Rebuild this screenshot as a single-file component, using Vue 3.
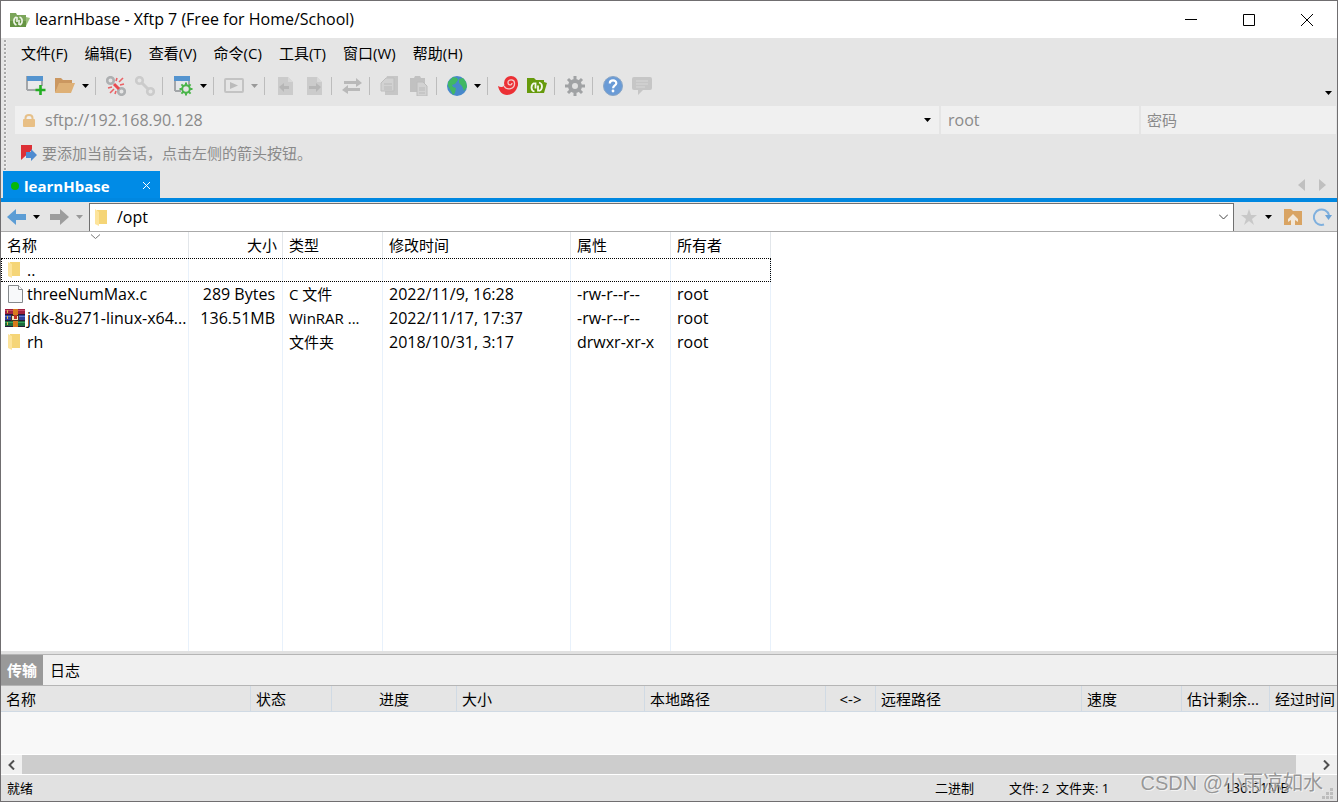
<script setup>
import { ref } from 'vue'

const menus = ['文件(F)', '编辑(E)', '查看(V)', '命令(C)', '工具(T)', '窗口(W)', '帮助(H)']

const tools = [
  { icon: 'new', label: '新建会话' },
  { icon: 'open', label: '打开会话', drop: 'on' },
  { sep: true },
  { icon: 'disconnect', label: '断开' },
  { icon: 'connect', label: '重新连接' },
  { sep: true },
  { icon: 'props', label: '属性', drop: 'on' },
  { sep: true },
  { icon: 'run', label: '运行', drop: 'off' },
  { sep: true },
  { icon: 'toLeft', label: '向左传输' },
  { icon: 'toRight', label: '向右传输' },
  { sep: true },
  { icon: 'swap', label: '同步' },
  { sep: true },
  { icon: 'copy', label: '复制' },
  { icon: 'paste', label: '粘贴' },
  { sep: true },
  { icon: 'globe', label: '语言', drop: 'on' },
  { sep: true },
  { icon: 'shell', label: 'Xshell' },
  { icon: 'ftp', label: 'Xftp' },
  { sep: true },
  { icon: 'gear', label: '选项' },
  { sep: true },
  { icon: 'help', label: '帮助' },
  { icon: 'chat', label: '反馈' }
]

const files = [
  { icon: 'folder', name: '..', size: '', type: '', time: '', attr: '', owner: '', focus: true },
  { icon: 'file', name: 'threeNumMax.c', size: '289 Bytes', type: 'C 文件', time: '2022/11/9, 16:28', attr: '-rw-r--r--', owner: 'root' },
  { icon: 'rar', name: 'jdk-8u271-linux-x64...', size: '136.51MB', type: 'WinRAR ...', time: '2022/11/17, 17:37', attr: '-rw-r--r--', owner: 'root' },
  { icon: 'folder', name: 'rh', size: '', type: '文件夹', time: '2018/10/31, 3:17', attr: 'drwxr-xr-x', owner: 'root' }
]

const address = ref('sftp://192.168.90.128')
const user = ref('root')
const password = ref('')
const path = ref('/opt')
</script>

<template>
  <div class="window">
    <header class="titlebar">
      <svg class="app-icon" viewBox="0 0 20 16" width="20" height="16">
        <path d="M0 1h6l1 2h9v12H0z" fill="#7ba55a" />
        <path d="M0 9h16v6H0z" fill="#659443" />
        <path d="M16 5l4 1-4 8z" fill="#9cc07c" />
        <path d="M7 5v5M6.500 13C3 12 3 6 6.500 5M9 8v5M9.500 5c3.500 1 3.500 7 0 8" stroke="#eef4e8" stroke-width="1.600" fill="none" />
      </svg>
      <h1 class="title">learnHbase - Xftp 7 (Free for Home/School)</h1>
      <button class="win-btn" aria-label="最小化"><svg width="12" height="12"><path d="M0 5.5h12" stroke="#000" /></svg></button>
      <button class="win-btn" aria-label="最大化"><svg width="12" height="12"><path d="M.5.5h11v11H.5z" fill="none" stroke="#000" /></svg></button>
      <button class="win-btn" aria-label="关闭"><svg width="12" height="12"><path d="M0 0l12 12M12 0L0 12" stroke="#000" /></svg></button>
    </header>

    <div class="bars">
      <nav class="menubar">
        <button v-for="m in menus" :key="m" class="menu">{{ m }}</button>
      </nav>

      <div class="toolbar" role="toolbar">
        <template v-for="(t, i) in tools" :key="i">
          <span v-if="t.sep" class="sep"></span>
          <template v-else>
            <button class="tool" :aria-label="t.label">
              <svg viewBox="0 0 20 20" width="20" height="20">
                <g v-if="t.icon === 'new'">
                  <path d="M1 14V1h15v9M1 14h9" fill="#e9eaec" stroke="#a3a6a9" stroke-width="2" />
                  <path d="M1 0h16v5H1z" fill="#5494cf" />
                  <path d="M14.5 9v10M9.500 14h10" stroke="#23ae23" stroke-width="2.600" />
                </g>
                <g v-else-if="t.icon === 'open'">
                  <path d="M0 2h6l2 2h9v4H5L0 17z" fill="#cb9760" />
                  <path d="M4 7h16l-4 10H0z" fill="#deb076" />
                </g>
                <g v-else-if="t.icon === 'disconnect'">
                  <g fill="none" stroke="#aeb0b2" stroke-width="2.600">
                    <circle cx="4.500" cy="4.500" r="3.300" /><circle cx="15.500" cy="15.500" r="3.300" />
                  </g>
                  <path d="M8 8l5 5" stroke="#e84a50" stroke-width="3" />
                  <path d="M10 5l1-3M13 6l4-4M14 9l4-1M6 11l-4 1M8 13l-4 4M10 15l-1 3" stroke="#ea6266" stroke-width="1.600" />
                </g>
                <g v-else-if="t.icon === 'connect'" fill="none" stroke="#cbcbcb" stroke-width="2.600">
                  <circle cx="4.500" cy="4.500" r="3.300" /><circle cx="15.500" cy="15.500" r="3.300" /><path d="M6.500 6.500l7 7" stroke-width="3" />
                </g>
                <g v-else-if="t.icon === 'props'">
                  <path d="M2 15V1h14v9M2 15h6" fill="#e4e7ea" stroke="#a3a6a9" stroke-width="2" />
                  <path d="M1 0h16v5H1z" fill="#5494cf" />
                  <circle cx="13" cy="13" r="3.800" fill="#e5e5e5" stroke="#4ab54a" stroke-width="2" />
                  <path d="M13 6.500v3M13 16.500v3M6.500 13h3M16.500 13h3M8.400 8.400l2 2M15.600 15.600l2 2M17.600 8.400l-2 2M10.400 15.600l-2 2" stroke="#4ab54a" stroke-width="2" />
                </g>
                <g v-else-if="t.icon === 'run'">
                  <rect x="1" y="3" width="18" height="13" rx="1" fill="none" stroke="#c3c3c3" stroke-width="2" />
                  <path d="M6 6l8 3.500L6 13z" fill="#bbb" />
                </g>
                <g v-else-if="t.icon === 'toLeft' || t.icon === 'toRight'">
                  <path d="M3 1h10l5 5v13H3z" fill="#cbcbcb" />
                  <path d="M13 1v5h5" fill="#d9d9d9" />
                  <path v-if="t.icon === 'toLeft'" d="M4 11l5-4v3h5v3H9v3z" fill="#b6b6b6" />
                  <path v-else d="M17 11l-5-4v3H5v3h7v3z" fill="#b6b6b6" />
                </g>
                <g v-else-if="t.icon === 'swap'" fill="#b9b9b9">
                  <path d="M2 5h12V2l6 5-6 4V8H2zM18 12H6V9l-6 5 6 4v-3h12z" />
                </g>
                <g v-else-if="t.icon === 'copy'">
                  <path d="M7 0h11v19H5V6z" fill="#c6c6c6" />
                  <path d="M6 2h8v13H1V7z" fill="#d2d2d2" stroke="#bebebe" />
                  <path d="M4 8h8M4 11h8M4 13h8" stroke="#bababa" />
                </g>
                <g v-else-if="t.icon === 'paste'">
                  <path d="M1 2h4l1-2h5l1 2h4v14H1z" fill="#c1c1c1" />
                  <path d="M8 6h6l4 4v10H8z" fill="#d2d2d2" stroke="#bcbcbc" />
                  <path d="M10 12h6M10 14h6M10 17h6" stroke="#bababa" />
                </g>
                <g v-else-if="t.icon === 'globe'">
                  <circle cx="10" cy="10" r="10" fill="#4788cb" />
                  <path d="M1 6l5-5 4 1 1 2-3 4-3 1 1 2 3 1-1 5-2 2-2-4-3-5zM12 3l4-1 3 4 1 5-3 4-2-5-3-3z" fill="#41b863" />
                </g>
                <g v-else-if="t.icon === 'shell'">
                  <path d="M0 10c3 2 5 1 7-1l13-2c0 7-5 12-11 12C4 19 1 15 0 10z" fill="#ec3035" />
                  <circle cx="13" cy="7" r="7" fill="#ec3035" />
                  <path d="M6 10c3 5 11 3 10.500-3 0-4-6.500-4-6.500-.5 0 3 4 3 4 .5" fill="none" stroke="#f3c9c9" stroke-width="1.300" />
                </g>
                <g v-else-if="t.icon === 'ftp'">
                  <path d="M0 2h7l2 2h8v13H0z" fill="#669a0b" />
                  <path d="M17 6l3 1-3 10z" fill="#669a0b" />
                  <path d="M8.500 6.500v6M7.500 15.500c-4-1-4-7 0-8.500M11 9.500v6M12 6.500c4 1 4 7 0 8.500" stroke="#f3f7ea" stroke-width="1.800" fill="none" />
                </g>
                <g v-else-if="t.icon === 'gear'">
                  <circle cx="10" cy="10" r="5" fill="#e0e0e0" stroke="#a0a2a4" stroke-width="4" />
                  <path d="M10 0v4M10 16v4M0 10h4M16 10h4M3 3l3 3M14 14l3 3M17 3l-3 3M6 14l-3 3" stroke="#a0a2a4" stroke-width="3" />
                </g>
                <g v-else-if="t.icon === 'help'">
                  <circle cx="10" cy="10" r="9.500" fill="#6a9bd6" stroke="#8aa6c5" />
                  <path d="M6.800 7.500c0-4 6.500-4 6.500-.3 0 2.300-3.200 2.300-3.200 5" fill="none" stroke="#fff" stroke-width="2.200" />
                  <circle cx="10" cy="15" r="1.400" fill="#fff" />
                </g>
                <g v-else-if="t.icon === 'chat'">
                  <path d="M2 1h16q2 0 2 2v9q0 2-2 2h-7l-5 5v-5H2q-2 0-2-2V3q0-2 2-2z" fill="#c6c6c6" />
                  <path d="M4 5h12M4 8h12M4 11h9" stroke="#d8d8d8" />
                </g>
              </svg>
            </button>
            <button v-if="t.drop" class="drop" :class="{ off: t.drop === 'off' }" :aria-label="t.label + '列表'">
              <svg width="7" height="4"><path d="M0 0h7L3.500 4z" fill="currentColor" /></svg>
            </button>
          </template>
        </template>
        <button class="drop last" aria-label="更多"><svg width="7" height="4"><path d="M0 0h7L3.500 4z" fill="currentColor" /></svg></button>
      </div>

      <div class="address">
        <div class="field host">
          <svg class="lock" width="12" height="13" viewBox="0 0 12 13">
            <path d="M2.500 6V4c0-4 7-4 7 0v2" fill="none" stroke="#e6c089" stroke-width="2" />
            <rect y="5" width="12" height="8" rx="1" fill="#e8bf85" />
          </svg>
          <input v-model="address" aria-label="主机地址">
          <button class="drop" aria-label="地址列表"><svg width="7" height="4"><path d="M0 0h7L3.500 4z" fill="currentColor" /></svg></button>
        </div>
        <div class="field user"><input v-model="user" aria-label="用户名"></div>
        <div class="field pass"><input v-model="password" type="password" placeholder="密码" aria-label="密码"></div>
      </div>

      <div class="hint">
        <svg width="16" height="16" viewBox="0 0 16 16">
          <path d="M0 0h11v5L0 15z" fill="#dd3036" />
          <path d="M5 7h5V4l6 6-6 6v-3H5z" fill="#4e8bd0" />
        </svg>
        <span>要添加当前会话，点击左侧的箭头按钮。</span>
      </div>
    </div>

    <div class="tabs">
      <div class="tab">
        <span class="dot"></span>
        <span class="tab-name">learnHbase</span>
        <button class="tab-close" aria-label="关闭标签"><svg width="7" height="7"><path d="M0 0l7 7M7 0L0 7" stroke="#fff" /></svg></button>
      </div>
      <button class="scroll-tab" aria-label="上一个"><svg width="7" height="12"><path d="M7 0v12L0 6z" fill="#c0c0c0" /></svg></button>
      <button class="scroll-tab" aria-label="下一个"><svg width="7" height="12"><path d="M0 0v12l7-6z" fill="#c0c0c0" /></svg></button>
    </div>

    <div class="pathbar">
      <button class="nav-btn" aria-label="后退"><svg width="19" height="16"><path d="M0 8l9-8v5h10v6H9v5z" fill="#5c9dd5" /></svg></button>
      <button class="drop" aria-label="后退列表"><svg width="7" height="4"><path d="M0 0h7L3.500 4z" fill="currentColor" /></svg></button>
      <button class="nav-btn forward" aria-label="前进"><svg width="19" height="16"><path d="M19 8l-9-8v5H0v6h10v5z" fill="#9d9d9d" /></svg></button>
      <button class="drop off" aria-label="前进列表"><svg width="7" height="4"><path d="M0 0h7L3.500 4z" fill="currentColor" /></svg></button>
      <div class="path">
        <svg width="12" height="17" viewBox="0 0 12 17"><path d="M2 1h10v14H2z" fill="#f5d577" /><path d="M0 0l4 3v14l-4-2z" fill="#fde49b" /></svg>
        <input v-model="path" aria-label="远程路径">
        <button class="path-drop" aria-label="路径列表"><svg width="9" height="6"><path d="M0 .5l4.500 4.500L9 .5" fill="none" stroke="#444" /></svg></button>
      </div>
      <button class="side star" aria-label="收藏"><svg width="16" height="16" viewBox="0 0 16 16"><path d="M8 0l2 6h6l-5 4 2 6-5-4-5 4 2-6-5-4h6z" fill="#c8c8c8" /></svg></button>
      <button class="drop" aria-label="收藏列表"><svg width="7" height="4"><path d="M0 0h7L3.500 4z" fill="currentColor" /></svg></button>
      <button class="side up" aria-label="上级目录"><svg width="18" height="16" viewBox="0 0 18 16"><path d="M0 0h7l2 2h9v14H0z" fill="#d9a463" /><path d="M9 5l5 5v3l-3-2v5H7v-5l-3 2v-3z" fill="#f2e8da" /></svg></button>
      <button class="side" aria-label="刷新"><svg width="19" height="18" viewBox="0 0 19 18"><path d="M11 16.500A7.700 7.700 0 1 1 16 7" fill="none" stroke="#7fb0de" stroke-width="2" /><path d="M12 7h7l-3.500 5z" fill="#6ba3d8" /></svg></button>
    </div>

    <main class="listing">
      <table class="files">
        <colgroup><col class="c-name"><col class="c-size"><col class="c-type"><col class="c-time"><col class="c-attr"><col class="c-own"></colgroup>
        <thead>
          <tr>
            <th class="sorted">名称<svg class="sort" width="9" height="5"><path d="M0 .5L4.500 4.500 9 .5" fill="none" stroke="#777" /></svg></th>
            <th class="num">大小</th><th>类型</th><th>修改时间</th><th>属性</th><th>所有者</th>
          </tr>
        </thead>
        <tbody>
          <tr v-for="f in files" :key="f.name" class="row" :class="{ focus: f.focus }">
            <td class="name-cell">
              <div class="name">
                <span class="ficon">
                  <svg v-if="f.icon === 'folder'" class="folder" width="12" height="16" viewBox="0 0 12 16"><path d="M2 0h10v14H2z" fill="#f5d577" /><path d="M0 0l4 2v14l-4-2z" fill="#fde49b" /></svg>
                  <svg v-else-if="f.icon === 'file'" class="file" width="15" height="18" viewBox="0 0 15 18"><path d="M.5.5h10l4 4v13H.5z" fill="#f8f9fa" stroke="#85898c" /><path d="M10.500.5v4h4" fill="#fff" stroke="#85898c" /></svg>
                  <svg v-else width="20" height="18" viewBox="0 0 20 18">
                    <path d="M0 0h20v6H0z" fill="#a02040" /><path d="M0 1h20v1H0z" fill="#c84a68" />
                    <path d="M0 6h20v6H0z" fill="#2f3f9b" /><path d="M0 7h20v1H0z" fill="#5c78d2" />
                    <path d="M0 12h20v6H0z" fill="#1d6c3c" /><path d="M0 13h20v1H0z" fill="#37a05b" />
                    <path d="M0 5h20v1H0zM0 11h20v1H0zM0 17h20v1H0z" fill="#241a38" />
                    <path d="M2 1h1v3H2zM2 7h1v3H2zM2 13h1v3H2z" fill="#e0b84a" />
                    <path d="M8 0h5v18H8z" fill="#d87a1d" />
                    <path d="M6 6h8v6H6z" fill="#4b3420" /><path d="M7 7h6v4H7z" fill="#f4e6bd" /><path d="M9 6h3v4H9z" fill="#c22f25" />
                  </svg>
                </span>
                <span class="fname">{{ f.name }}</span>
              </div>
            </td>
            <td class="num">{{ f.size }}</td>
            <td class="kind">{{ f.type }}</td>
            <td>{{ f.time }}</td>
            <td>{{ f.attr }}</td>
            <td>{{ f.owner }}</td>
          </tr>
          <tr class="filler" aria-hidden="true"><td></td><td></td><td></td><td></td><td></td><td></td></tr>
        </tbody>
      </table>
    </main>

    <section class="transfer">
      <div class="panel-tabs" role="tablist">
        <button class="panel-tab active" role="tab" aria-selected="true">传输</button>
        <button class="panel-tab" role="tab" aria-selected="false">日志</button>
      </div>
      <table class="jobs">
        <colgroup>
          <col class="j-name"><col class="j-state"><col class="j-prog"><col class="j-size"><col class="j-local">
          <col class="j-dir"><col class="j-remote"><col class="j-speed"><col class="j-left"><col>
        </colgroup>
        <thead>
          <tr>
            <th>名称</th><th>状态</th><th class="mid">进度</th><th>大小</th><th>本地路径</th>
            <th class="mid">&lt;-&gt;</th><th>远程路径</th><th>速度</th><th>估计剩余...</th><th>经过时间</th>
          </tr>
        </thead>
      </table>
      <div class="jobs-body"></div>
      <div class="hscroll">
        <button aria-label="向左滚动"><svg width="7" height="10"><path d="M6 .5L1.500 5 6 9.500" fill="none" stroke="#505050" stroke-width="2" /></svg></button>
        <div class="thumb"></div>
        <button class="right" aria-label="向右滚动"><svg width="7" height="10"><path d="M1 .5L5.500 5 1 9.500" fill="none" stroke="#505050" stroke-width="2" /></svg></button>
      </div>
    </section>

    <footer class="status">
      <span class="ready">就绪</span>
      <span class="mode">二进制</span>
      <span class="count">文件: 2&nbsp; 文件夹: 1</span>
      <span class="total">136.51MB</span>
      <svg class="grip" width="11" height="11" fill="#bdbdbd"><path d="M8 0h3v3H8zM4 4h3v3H4zM8 4h3v3H8zM0 8h3v3H0zM4 8h3v3H4zM8 8h3v3H8z" /></svg>
      <span class="watermark">CSDN @小雨凉如水</span>
    </footer>
  </div>
</template>

<style>
body {
  margin: 0;
}
</style>

<style scoped>
.window {
  box-sizing: border-box;
  display: flex;
  flex-direction: column;
  min-height: 100vh;
  border: 1px solid #706e70;
  background: #e5e5e5;
  color: #000;
  font: 15px/20px "Open Sans", "Noto Sans CJK SC", sans-serif;
}

svg {
  display: block;
  flex: none;
}

button,
input {
  margin: 0;
  padding: 0;
  border: 0;
  background: none;
  color: inherit;
  font: inherit;
}

input {
  flex: 1;
  min-width: 0;
  outline: 0;
  font-size: 16px;
}

button {
  display: flex;
  align-items: center;
  justify-content: center;
  flex: none;
}

.titlebar {
  display: flex;
  align-items: center;
  height: 37px;
  padding: 0 1px 0 9px;
  background: #fff;
}

.title {
  flex: 1;
  margin: 0 0 0 5px;
  padding-bottom: 2px;
  font-size: 16px;
  font-weight: 400;
}

.win-btn {
  width: 58px;
  height: 36px;
}

.bars {
  position: relative;
  height: 133px;
}

.bars::before {
  content: "";
  position: absolute;
  left: 3px;
  top: 2px;
  bottom: 0;
  width: 3px;
  background: radial-gradient(circle at 1px 1px, #a8a8a8 1px, #fafafa 1px, transparent 2px) 0 0 / 3px 4px;
}

.menubar {
  display: flex;
  gap: 17px;
  height: 29px;
  padding: 0 0 2px 20px;
}

.toolbar {
  display: flex;
  align-items: center;
  height: 34px;
  padding-left: 20px;
}

.tool {
  width: 29px;
  height: 28px;
}

.sep {
  width: 1px;
  height: 18px;
  margin: 0 5px 0 3px;
  background: #bcbcbc;
}

.drop {
  width: 13px;
  height: 20px;
}

.drop.off {
  color: #999;
}

.drop.last {
  margin: 14px 2px 0 auto;
}

.address {
  display: flex;
  gap: 2px;
  height: 28px;
  margin: 3px 1px 0 14px;
  color: #8a8a8a;
}

.field {
  display: flex;
  align-items: center;
  background: #f0f0f0;
}

.host {
  flex: 1;
  gap: 10px;
  padding: 0 5px 0 8px;
}

.host .drop {
  color: #000;
}

.user {
  width: 191px;
  padding-left: 7px;
}

.pass {
  width: 189px;
  padding-left: 6px;
}

.pass input {
  font-size: 15px;
}

.pass input::placeholder {
  color: #8a8a8a;
}

.hint {
  display: flex;
  align-items: center;
  gap: 5px;
  height: 38px;
  padding-left: 20px;
  color: #8a8a8a;
}

.tabs {
  display: flex;
  align-items: center;
  height: 27px;
  padding-right: 4px;
  border-bottom: 4px solid #0087e0;
}

.tab {
  display: flex;
  align-items: center;
  box-sizing: border-box;
  width: 157px;
  height: 27px;
  margin: 0 auto 0 2px;
  padding: 2px 7px 0 8px;
  background: #008be6;
  color: #fff;
  font-weight: 700;
}

.dot {
  width: 8px;
  height: 8px;
  border-radius: 50%;
  background: #07b807;
}

.tab-name {
  flex: 1;
  margin-left: 5px;
}

.tab-close {
  width: 14px;
  height: 14px;
}

.scroll-tab {
  width: 21px;
  height: 20px;
}

.pathbar {
  display: flex;
  align-items: center;
  height: 29px;
  padding-left: 6px;
  border-bottom: 1px solid #aaa;
}

.nav-btn {
  width: 19px;
  margin-right: 4px;
}

.forward {
  margin-left: 7px;
}

.path {
  display: flex;
  flex: 1;
  align-items: center;
  align-self: stretch;
  gap: 10px;
  margin: 1px 7px 0 3px;
  padding: 0 0 1px 5px;
  border: solid #707070;
  border-width: 1px 1px 0;
  background: #fff;
}

.path-drop {
  width: 20px;
  height: 20px;
}

.side {
  min-width: 16px;
  height: 20px;
}

.star {
  margin-right: 5px;
}

.up {
  margin: 0 11px 0 9px;
}

.pathbar .side:last-child {
  margin-right: 5px;
}

.listing {
  display: flex;
  flex: 1;
  background: #fff;
}

table {
  border-collapse: separate;
  border-spacing: 0;
  table-layout: fixed;
}

th,
td {
  overflow: hidden;
  padding: 0 6px;
  font-weight: 400;
  text-align: left;
  text-overflow: ellipsis;
  white-space: nowrap;
}

.files {
  width: 770px;
}

.c-name { width: 188px; }
.c-size { width: 94px; }
.c-type { width: 100px; }
.c-time { width: 188px; }
.c-attr { width: 100px; }
.c-own { width: 100px; }

.files th {
  height: 26px;
  border-right: 1px solid #e2e6ea;
}

.files td {
  border-right: 1px solid #e8f1fb;
}

.files .num {
  text-align: right;
}

.files td.num {
  padding-right: 7px;
}

.files th.num {
  padding-right: 5px;
}

.sorted {
  position: relative;
}

.sort {
  position: absolute;
  left: 90px;
  top: 2px;
}

.row td {
  height: 24px;
  font-size: 16px;
}

.row td.kind {
  font-size: 15px;
}

.row .name-cell {
  padding: 0 0 0 4px;
}

.focus {
  outline: 1px dotted #000;
  outline-offset: -1px;
}

.name {
  display: flex;
  align-items: center;
}

.ficon {
  flex: none;
  width: 22px;
}

.folder,
.file {
  margin-left: 3px;
}

.filler td {
  height: auto;
}

.transfer {
  border-top: 3px solid #e1e1e1;
  background: #f8f8f8;
}

.panel-tabs {
  display: flex;
  height: 30px;
  border: solid #b5b5b5;
  border-width: 1px 0;
  background: #f0f0f0;
}

.panel-tab {
  width: 42px;
}

.panel-tab.active {
  background: #999;
  color: #fff;
  font-weight: 700;
}

.panel-tab + .panel-tab {
  width: 44px;
}

.jobs {
  width: 100%;
}

.j-name { width: 250px; }
.j-state { width: 81px; }
.j-prog { width: 125px; }
.j-size { width: 188px; }
.j-local { width: 181px; }
.j-dir { width: 50px; }
.j-remote { width: 206px; }
.j-speed { width: 100px; }
.j-left { width: 88px; }

.jobs th {
  height: 25px;
  padding: 0 5px;
  border: solid #d0dae4;
  border-width: 0 1px 1px 0;
  background: #e5e5e5;
}

.jobs th:last-child {
  padding-right: 0;
  border-right: 0;
}

.jobs .mid {
  text-align: center;
}

.jobs-body {
  height: 42px;
}

.hscroll {
  display: flex;
  height: 19px;
  border: solid #fff;
  border-width: 1px 0;
  background: #f0f0f0;
}

.hscroll button {
  width: 21px;
}

.hscroll .right {
  width: 22px;
}

.thumb {
  flex: 1;
  margin-right: 19px;
  background: #cdcdcd;
}

.status {
  position: relative;
  display: flex;
  align-items: center;
  height: 26px;
  padding-left: 6px;
  background: #e1e1e1;
  font-size: 13px;
}

.ready {
  flex: 1;
}

.mode {
  width: 74px;
}

.count {
  width: 215px;
}

.total {
  width: 98px;
  font-size: 14px;
}

.grip {
  align-self: flex-end;
  margin: 0 4px 2px 0;
}

.watermark {
  position: absolute;
  right: 14px;
  bottom: 4px;
  color: rgba(140, 140, 140, 0.9);
  font-family: "Liberation Sans", "Noto Sans CJK SC", sans-serif;
  font-size: 20px;
  line-height: 28px;
  text-shadow: 1px 1px 0 rgba(255, 255, 255, 0.6), -1px -1px 0 rgba(255, 255, 255, 0.3);
  white-space: nowrap;
}
</style>
